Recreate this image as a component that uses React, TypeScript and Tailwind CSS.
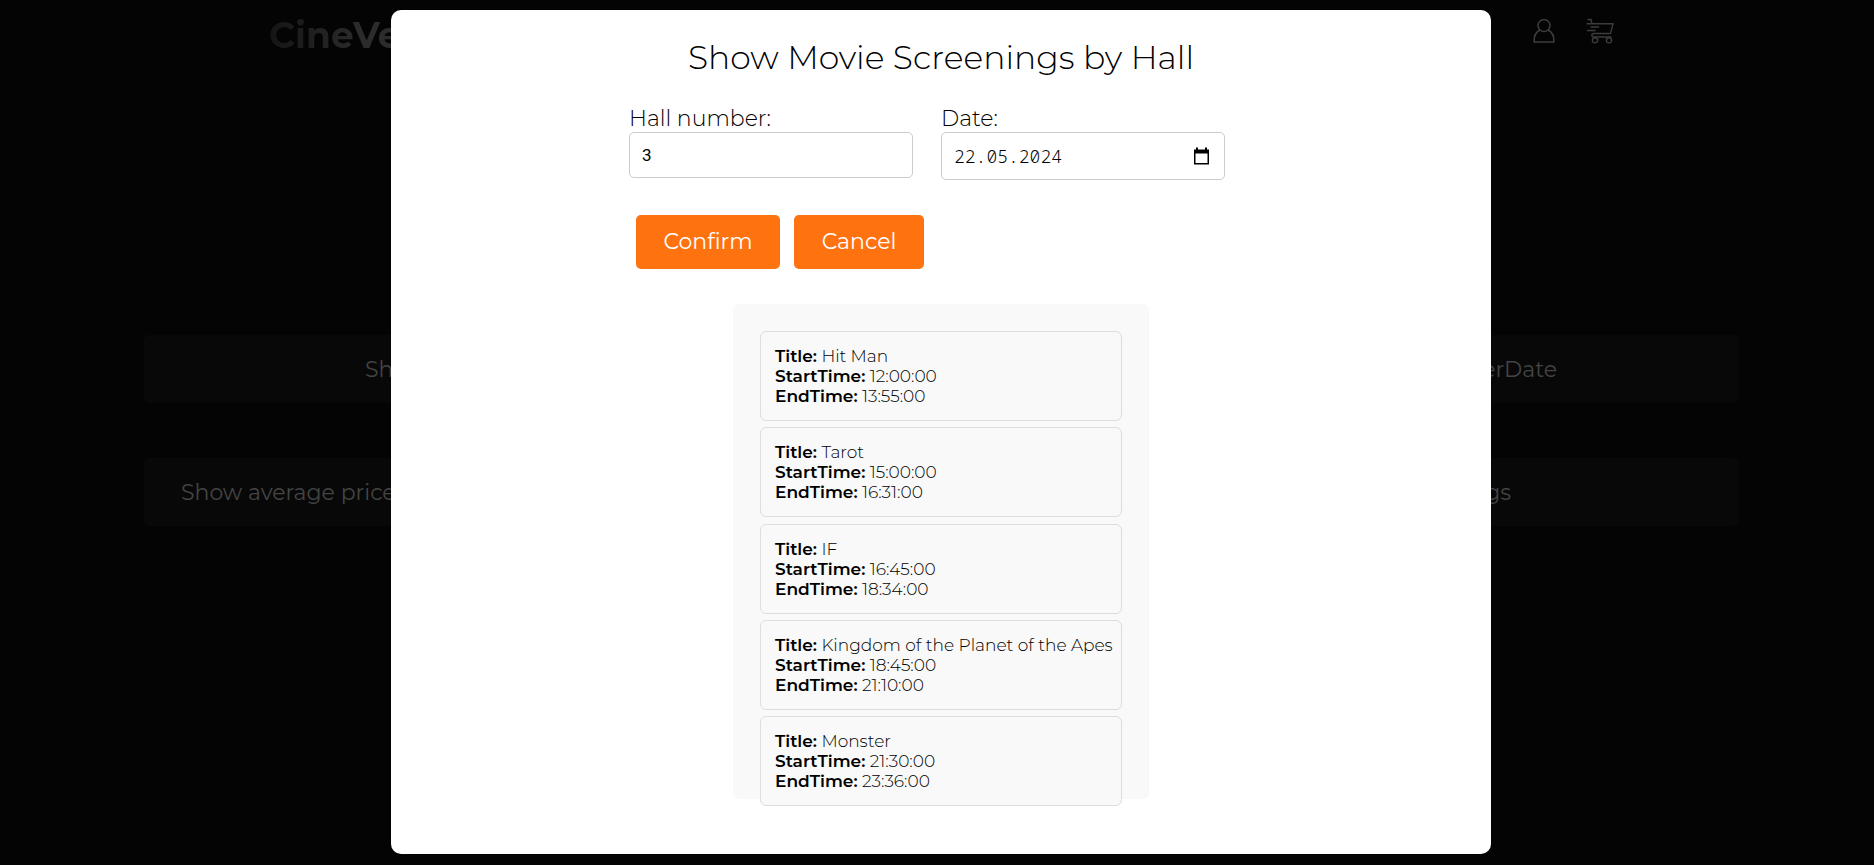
const screenings = [
  { title: "Hit Man", start: "12:00:00", end: "13:55:00" },
  { title: "Tarot", start: "15:00:00", end: "16:31:00" },
  { title: "IF", start: "16:45:00", end: "18:34:00" },
  { title: "Kingdom of the Planet of the Apes", start: "18:45:00", end: "21:10:00" },
  { title: "Monster", start: "21:30:00", end: "23:36:00" },
];

const tileClass =
  "flex h-[68px] items-center rounded-[5px] bg-[#080808] text-[22px] text-[#444444]";

function UserIcon() {
  return (
    <svg width="22" height="26" viewBox="0 0 22 26" fill="none" stroke="currentColor" strokeWidth="1.6">
      <circle cx="11" cy="7.5" r="6" />
      <path d="M6.8 12C3.4 14 1.2 17.5 1.2 21.5V24H20.8V21.5C20.8 17.5 18.6 14 15.2 12" />
    </svg>
  );
}

function CartIcon() {
  return (
    <svg width="28" height="26" viewBox="0 0 28 26" fill="none" stroke="currentColor" strokeWidth="1.4">
      <path d="M1.5 1.5H5L6 5.8M0.5 5.8H27L24.5 15.5H8.5C5 15.5 5 19 8 19H25.5M4.5 9H13M1 12.5H9.5" />
      <circle cx="9" cy="22.3" r="2.6" />
      <circle cx="23" cy="22.3" r="2.6" />
    </svg>
  );
}

function Field({ term, value }: { term: string; value: string }) {
  return (
    <p>
      <strong className="font-semibold">{term}:</strong> {value}
    </p>
  );
}

export default function App() {
  return (
    <div className="relative min-h-screen overflow-hidden bg-[#040404] pl-2 font-['Montserrat','Inter',sans-serif]">
      <header className="flex items-start justify-between pr-[260px] pl-[261px] pt-[18px] text-[#3c3c3c]">
        <a
          href="#"
          className="bg-linear-to-r from-[#151515] to-[#2c2c2c] to-50% bg-clip-text text-[36px] leading-[34px] font-bold text-transparent"
        >
          CineVerse
        </a>
        <nav className="flex gap-[31px]">
          <a href="#" aria-label="Account"><UserIcon /></a>
          <a href="#" aria-label="Cart"><CartIcon /></a>
        </nav>
      </header>

      <main className="flex flex-col gap-[55px] pt-[283px] pr-[135px] pl-[136px]">
        <div className="flex">
          <button className={`${tileClass} grow justify-between pr-[182px] pl-[221px]`}>
            <span>Show</span>
            <span>OrderDate</span>
          </button>
        </div>
        <div className="flex">
          <button className={`${tileClass} grow justify-between pr-[228px] pl-[37px]`}>
            <span>Show average price</span>
            <span>Screenings</span>
          </button>
        </div>
      </main>

      <div className="absolute inset-0 flex items-start justify-center pt-[10px] pl-2">
        <section
          role="dialog"
          aria-labelledby="dialog-title"
          className="flex min-h-[844px] w-full max-w-[1100px] flex-col items-center rounded-[10px] bg-white pt-6 text-black"
        >
          <h1 id="dialog-title" className="text-[33px] leading-[46px] font-light">
            Show Movie Screenings by Hall
          </h1>
          <form className="w-[624px] pt-[25px]" onSubmit={(e) => e.preventDefault()}>
            <div className="flex items-start gap-7">
              <div className="flex flex-col">
                <label htmlFor="hall" className="text-[22px] leading-[27px] font-light">Hall number:</label>
                <input
                  id="hall"
                  defaultValue="3"
                  className="h-[46px] w-[284px] rounded-[5px] border border-[#cccccc] px-3 font-['Roboto','Liberation_Sans',sans-serif] text-[17px] outline-none"
                />
              </div>
              <div className="flex flex-col">
                <label htmlFor="date" className="text-[22px] leading-[27px] font-light">Date:</label>
                <div className="flex h-12 w-[284px] items-center rounded-[5px] border border-[#cccccc] px-3">
                  <input
                    id="date"
                    defaultValue="22.05.2024"
                    className="min-w-0 grow font-['Noto_Sans_Mono','DejaVu_Sans_Mono',monospace] text-lg font-light outline-none"
                  />
                  <button type="button" aria-label="Open calendar">
                    <svg width="20" height="20" viewBox="0 0 20 20">
                      <path
                        fill="currentColor"
                        fillRule="evenodd"
                        d="M4 1.5h2v2h7v-2h2v2h2v15H2v-15h2zM3.5 7.5V17h12V7.5z"
                      />
                    </svg>
                  </button>
                </div>
              </div>
            </div>
            <div className="flex gap-[14px] pt-[35px] pl-[7px] text-[22px] text-white">
              <button type="submit" className="h-[54px] w-36 rounded-[5px] bg-[#ff7210] pb-[2px]">Confirm</button>
              <button type="button" className="h-[54px] w-[130px] rounded-[5px] bg-[#ff7210] pb-[2px]">Cancel</button>
            </div>
          </form>
          <div className="mt-[35px] h-[495px] w-[416px] rounded-md bg-[#f9f9f9] p-[27px]">
            <ul className="flex h-[475px] flex-col justify-between">
              {screenings.map((s) => (
                <li
                  key={s.title}
                  className="h-[90px] rounded-md border border-[#dddddd] bg-[#f9f9f9] px-[14px] pt-[14px] text-[17px] leading-5 font-light whitespace-nowrap"
                >
                  <Field term="Title" value={s.title} />
                  <Field term="StartTime" value={s.start} />
                  <Field term="EndTime" value={s.end} />
                </li>
              ))}
            </ul>
          </div>
        </section>
      </div>
    </div>
  );
}
